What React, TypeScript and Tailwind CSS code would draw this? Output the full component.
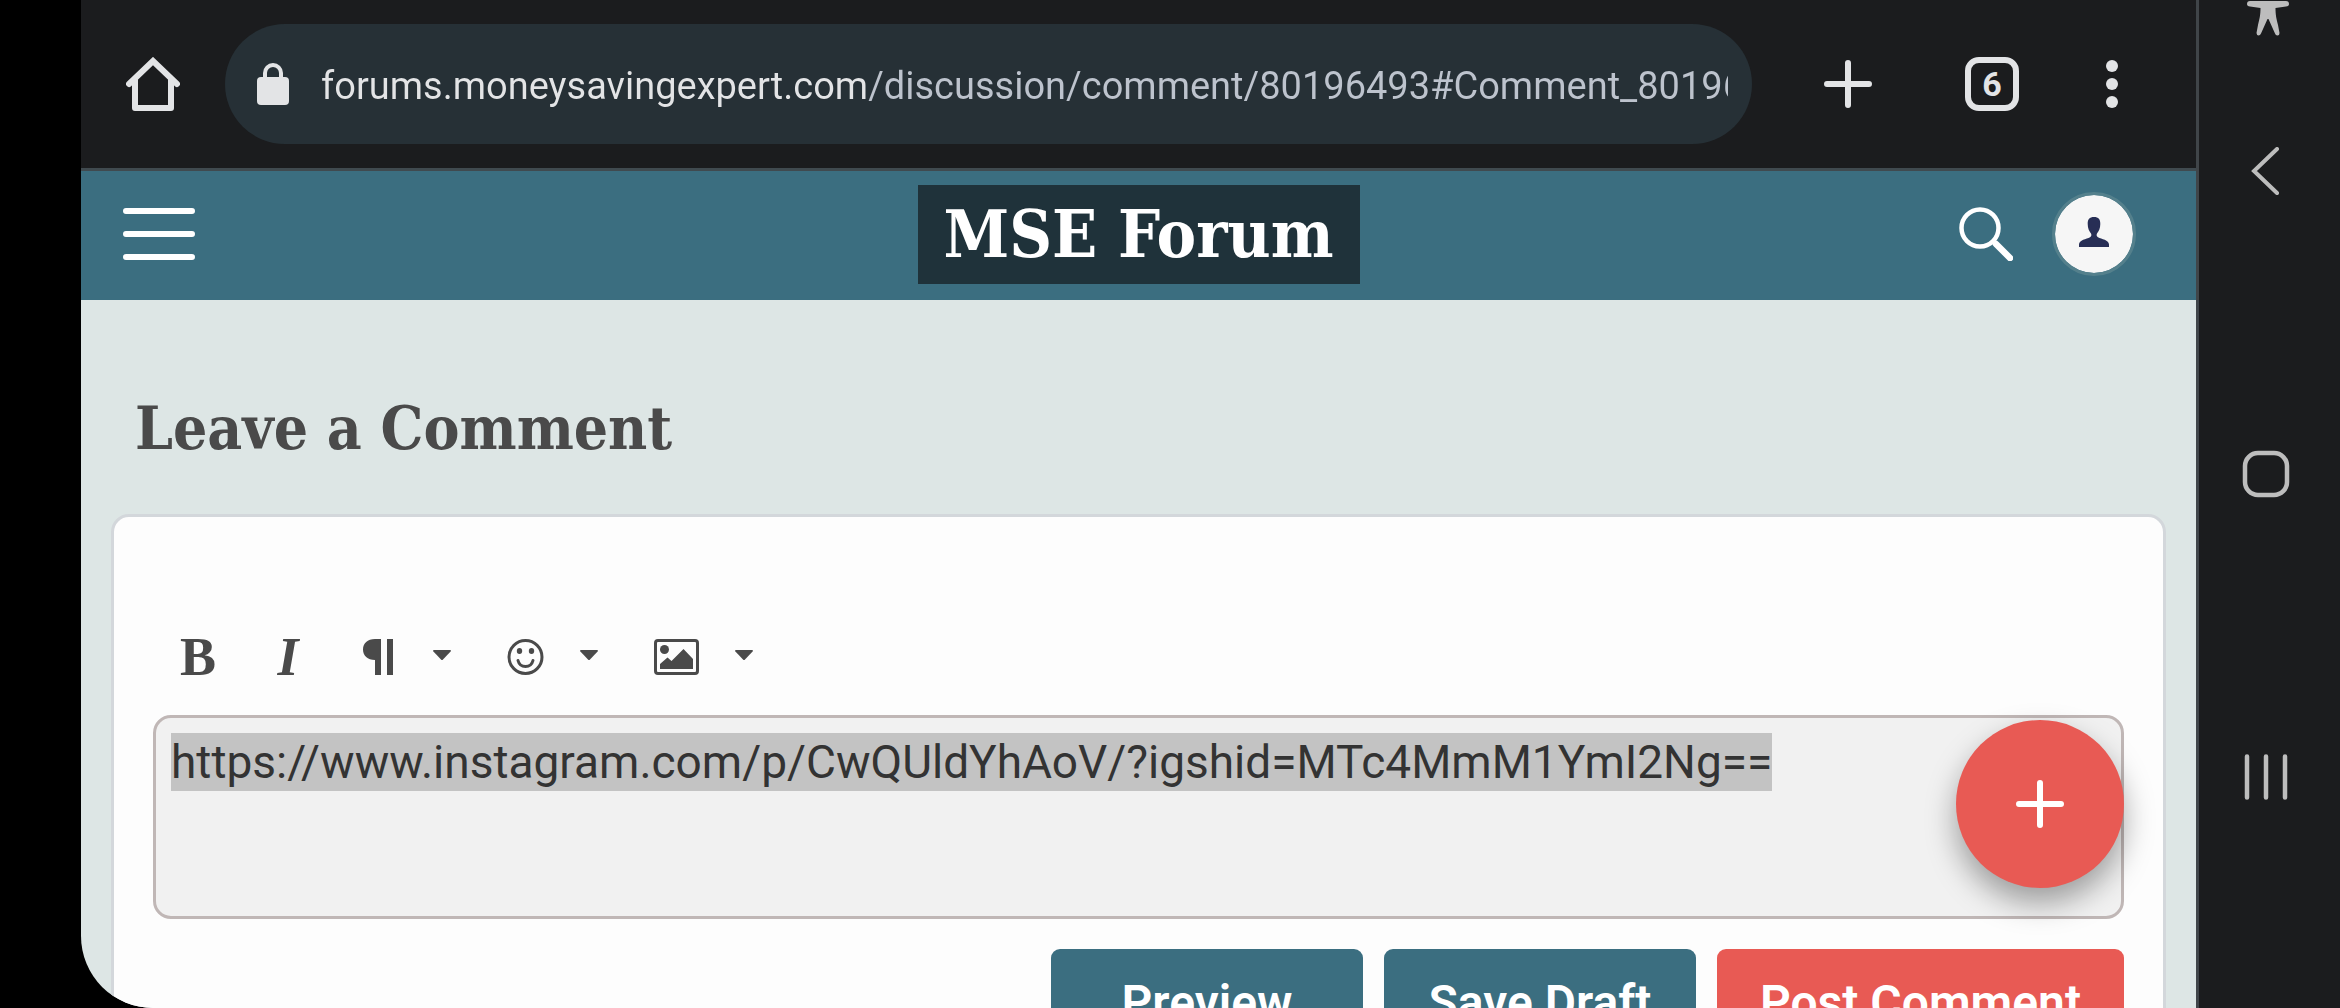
import { useEffect, useRef } from 'react';
import type { ReactNode } from 'react';

const PAGE_URL = 'forums.moneysavingexpert.com/discussion/comment/80196493#Comment_80196493';
const DRAFT = 'https://www.instagram.com/p/CwQUldYhAoV/?igshid=MTc4MmM1YmI2Ng==';

function Caret() {
  return (
    <svg viewBox="0 0 18 10" className="w-[18px] h-[10px] mb-1" fill="currentColor">
      <path d="M1 0h16q1.500 0 .6 1.400L10 9.500q-1 1-2 0L.4 1.400Q-.5 0 1 0z" />
    </svg>
  );
}

interface ToolButtonProps {
  label: string;
  children: ReactNode;
}

function MenuButton({ label, children }: ToolButtonProps) {
  return (
    <button type="button" aria-label={label} className="flex items-center gap-9 h-full pl-[30px] pr-[26px]">
      {children}
      <Caret />
    </button>
  );
}

function BrowserBar() {
  return (
    <div className="flex items-center h-[171px] border-b-3 border-[#404a4f] bg-[#1b1c1e] pl-[45px] pr-[78px]">
      <button type="button" aria-label="Home">
        <svg viewBox="0 0 54 54" className="size-[54px]" fill="none" stroke="#e3e4e6" strokeWidth="6" strokeLinecap="round" strokeLinejoin="round">
          <path d="M3 27 27 4l24 23" strokeLinejoin="miter" />
          <path d="M9 23v28h36V23" />
        </svg>
      </button>

      <div className="flex items-center flex-1 min-w-0 h-[120px] ml-[45px] rounded-full bg-[#263036] pl-8 pr-6">
        <svg viewBox="0 0 32 42" className="w-8 h-[42px] shrink-0">
          <rect y="14" width="32" height="28" rx="4" fill="#e3e4e6" />
          <path d="M8 16v-6a8 8 0 0 1 16 0v6" fill="none" stroke="#e3e4e6" strokeWidth="4" />
        </svg>
        {/* the host part of the address is brighter than the path */}
        <input
          type="text"
          aria-label="Address"
          readOnly
          spellCheck={false}
          value={PAGE_URL}
          className="flex-1 min-w-0 ml-8 pt-1 text-[38px] leading-[48px] text-transparent bg-clip-text bg-[linear-gradient(to_right,#e3e4e6_546px,#bdc3cd_546px)] outline-none"
        />
      </div>

      <button type="button" aria-label="New tab" className="ml-[72px]">
        <svg viewBox="0 0 48 48" className="size-12" stroke="#e3e4e6" strokeWidth="6" strokeLinecap="round">
          <path d="M24 3v42M3 24h42" />
        </svg>
      </button>
      <button
        type="button"
        aria-label="Tabs"
        className="flex items-center justify-center size-[54px] ml-[93px] rounded-[14px] border-6 border-[#e3e4e6] text-[#e3e4e6] text-[34px] leading-none font-bold"
      >
        6
      </button>
      <button type="button" aria-label="Menu" className="ml-[87px]">
        <svg viewBox="0 0 12 48" className="w-3 h-12" fill="#e3e4e6">
          <circle cx="6" cy="6" r="6" />
          <circle cx="6" cy="24" r="6" />
          <circle cx="6" cy="42" r="6" />
        </svg>
      </button>
    </div>
  );
}

function ForumHeader() {
  return (
    <header className="grid grid-cols-[1fr_auto_1fr] items-center h-[129px] bg-[#3b6e80] px-[42px] pb-[3px]">
      <button type="button" aria-label="Navigation" className="justify-self-start">
        <svg viewBox="0 0 72 52" className="w-[72px] h-[52px]" stroke="#fff" strokeWidth="6" strokeLinecap="round">
          <path d="M3 3h66M3 26h66M3 49h66" />
        </svg>
      </button>

      <a
        href="#forum"
        className="flex items-center justify-center w-[442px] h-[99px] bg-[#1f323a] text-white text-[66px] leading-none font-bold font-['DejaVu_Serif_Condensed','DejaVu_Serif',serif]"
      >
        MSE Forum
      </a>

      <div className="flex items-center justify-self-end gap-[39px] mr-[18px]">
        <button type="button" aria-label="Search">
          <svg viewBox="0 0 54 54" className="size-[54px]" fill="none" stroke="#fff" strokeLinecap="round">
            <circle cx="21" cy="21" r="18.500" strokeWidth="4.500" />
            <path d="M37 37l14 14" strokeWidth="6.500" />
          </svg>
        </button>
        <button
          type="button"
          aria-label="Account"
          className="flex items-center justify-center size-[84px] rounded-full border-3 border-[#54808c] bg-[#f6f6f6] bg-clip-padding"
        >
          <svg viewBox="0 0 30 30" className="size-[30px] mb-1" fill="#272e55">
            <path d="M15 0c4.500 0 6.500 2.500 6.300 7-.1 4.500-1.300 7-3.300 9.500-.7 1.500-.4 3 1 3.800 3.500 1.800 11 2.700 11 7.200V30H0v-2.500c0-4.500 7.500-5.400 11-7.200 1.400-.8 1.700-2.300 1-3.800-2-2.500-3.200-5-3.300-9.500C8.500 2.500 10.500 0 15 0z" />
          </svg>
        </button>
      </div>
    </header>
  );
}

function Toolbar() {
  return (
    <div className="flex items-center h-[90px] text-[#4a4a4a]">
      <button type="button" aria-label="Bold" className="w-[90px] text-[54px] leading-none font-bold font-['Liberation_Serif',serif]">
        B
      </button>
      <button type="button" aria-label="Italic" className="w-[90px] text-[54px] leading-none font-bold italic font-['Liberation_Serif',serif]">
        I
      </button>
      <MenuButton label="Paragraph">
        <svg viewBox="0 0 34 36" className="w-[34px] h-9" fill="currentColor">
          <path d="M18 0v36h-6V21C4.500 21 0 16.500 0 10.500S4.500 0 12 0zM24 0h6v36h-6z" />
        </svg>
      </MenuButton>
      <MenuButton label="Emoji">
        <svg viewBox="0 0 36 36" className="w-[37px] h-9" fill="none" stroke="currentColor" strokeWidth="3">
          <circle cx="18" cy="18" r="16.500" />
          <path d="M10.500 21.500c1 4 4 6 7.500 6s6.500-2 7.500-6" strokeLinecap="round" />
          <ellipse cx="12" cy="12" rx="2.700" ry="3" fill="currentColor" stroke="none" />
          <ellipse cx="24" cy="12" rx="2.700" ry="3" fill="currentColor" stroke="none" />
        </svg>
      </MenuButton>
      <MenuButton label="Image">
        <svg viewBox="0 0 45 36" className="w-[45px] h-9" fill="currentColor">
          <rect x="1.500" y="1.500" width="42" height="33" rx="2.500" fill="none" stroke="currentColor" strokeWidth="3" />
          <circle cx="10.500" cy="10.500" r="4.500" />
          <path d="M6 30v-5l7.500-6.500 4 3.500L29.500 10 39 20v10z" />
        </svg>
      </MenuButton>
    </div>
  );
}

function SystemNav() {
  return (
    <nav className="flex flex-col items-center w-36 shrink-0 border-l-3 border-[#404549] bg-[#1b1c1e] pr-2">
      <button type="button" aria-label="Accessibility" className="mb-[111px] ml-1">
        <svg viewBox="0 0 42 36" className="w-[42px] h-9" fill="#bdbdbd">
          <path d="M3 1h36q3 0 3 3 0 2-3 2.500L28.500 8c0 7 1 11 2.500 17l1.500 8q0 2.500-2 2.500t-2.500-2L21.500 19h-1L14 33.500q-.8 2-2.500 2t-2-2.500L11 25c1.500-6 2.500-10 2.500-17L3 6.500Q0 6 0 4q0-3 3-3z" />
        </svg>
      </button>
      <div className="flex flex-col items-center gap-[255px]">
        <button type="button" aria-label="Back">
          <svg viewBox="0 0 48 48" className="size-12" fill="none" stroke="#bdbdbd" strokeWidth="4" strokeLinecap="round">
            <path d="M35 2 12 24l23 22" />
          </svg>
        </button>
        <button type="button" aria-label="Home screen">
          <svg viewBox="0 0 48 48" className="size-12" fill="none" stroke="#bdbdbd" strokeWidth="4.500">
            <rect x="3" y="3" width="42" height="42" rx="13" />
          </svg>
        </button>
        <button type="button" aria-label="Recent apps">
          <svg viewBox="0 0 48 48" className="size-12" stroke="#bdbdbd" strokeWidth="4.500" strokeLinecap="round">
            <path d="M5 3.500v41M24 3.500v41M43 3.500v41" />
          </svg>
        </button>
      </div>
    </nav>
  );
}

export default function App() {
  const editorRef = useRef<HTMLTextAreaElement>(null);

  useEffect(() => {
    editorRef.current?.focus({ preventScroll: true });
    editorRef.current?.select();
  }, []);

  return (
    <div className="flex h-screen overflow-hidden bg-black pl-[81px] font-[Roboto,sans-serif]">
      <div className="flex-1 min-w-0 overflow-hidden rounded-bl-[72px] bg-[#dde6e5]">
        <BrowserBar />
        <ForumHeader />

        <main className="px-[30px] pt-24">
          <h1 className="ml-6 text-[#4a4a4a] text-[60px] leading-[64px] font-bold font-['DejaVu_Serif_Condensed','DejaVu_Serif',serif]">
            Leave a Comment
          </h1>

          <form className="mt-[54px] rounded-[18px] border-3 border-[#d3d7db] bg-[#fdfdfd] px-[39px] pt-[95px] pb-10">
            <Toolbar />

            <div className="relative mt-[13px]">
              <textarea
                ref={editorRef}
                aria-label="Comment"
                spellCheck={false}
                defaultValue={DRAFT}
                className="block w-full h-[204px] resize-none rounded-[18px] border-3 border-[#c0b7b6] bg-[#f1f1f1] p-[15px] text-[46px] leading-[58px] text-[#333] outline-none selection:bg-[#c3c3c3] selection:text-[#333]"
              />
              {/* floating new post button */}
              <button
                type="button"
                aria-label="New post"
                className="absolute top-[5px] right-0 flex items-center justify-center size-[168px] rounded-full bg-[#e85a54] shadow-[0_15px_30px_rgba(0,0,0,0.35)]"
              >
                <svg viewBox="0 0 48 48" className="size-12" stroke="#fff" strokeWidth="6" strokeLinecap="round">
                  <path d="M24 3v42M3 24h42" />
                </svg>
              </button>
            </div>

            <div className="flex justify-end gap-[21px] mt-[30px] text-white text-[48px] leading-[54px] font-semibold">
              <button type="button" className="w-[312px] h-[108px] rounded-[9px] bg-[#3b6e80]">
                Preview
              </button>
              <button type="button" className="w-[312px] h-[108px] rounded-[9px] bg-[#3b6e80]">
                Save Draft
              </button>
              <button type="submit" className="w-[407px] h-[108px] rounded-[9px] bg-[#e85a54]">
                Post Comment
              </button>
            </div>
          </form>
        </main>
      </div>

      <SystemNav />
    </div>
  );
}
